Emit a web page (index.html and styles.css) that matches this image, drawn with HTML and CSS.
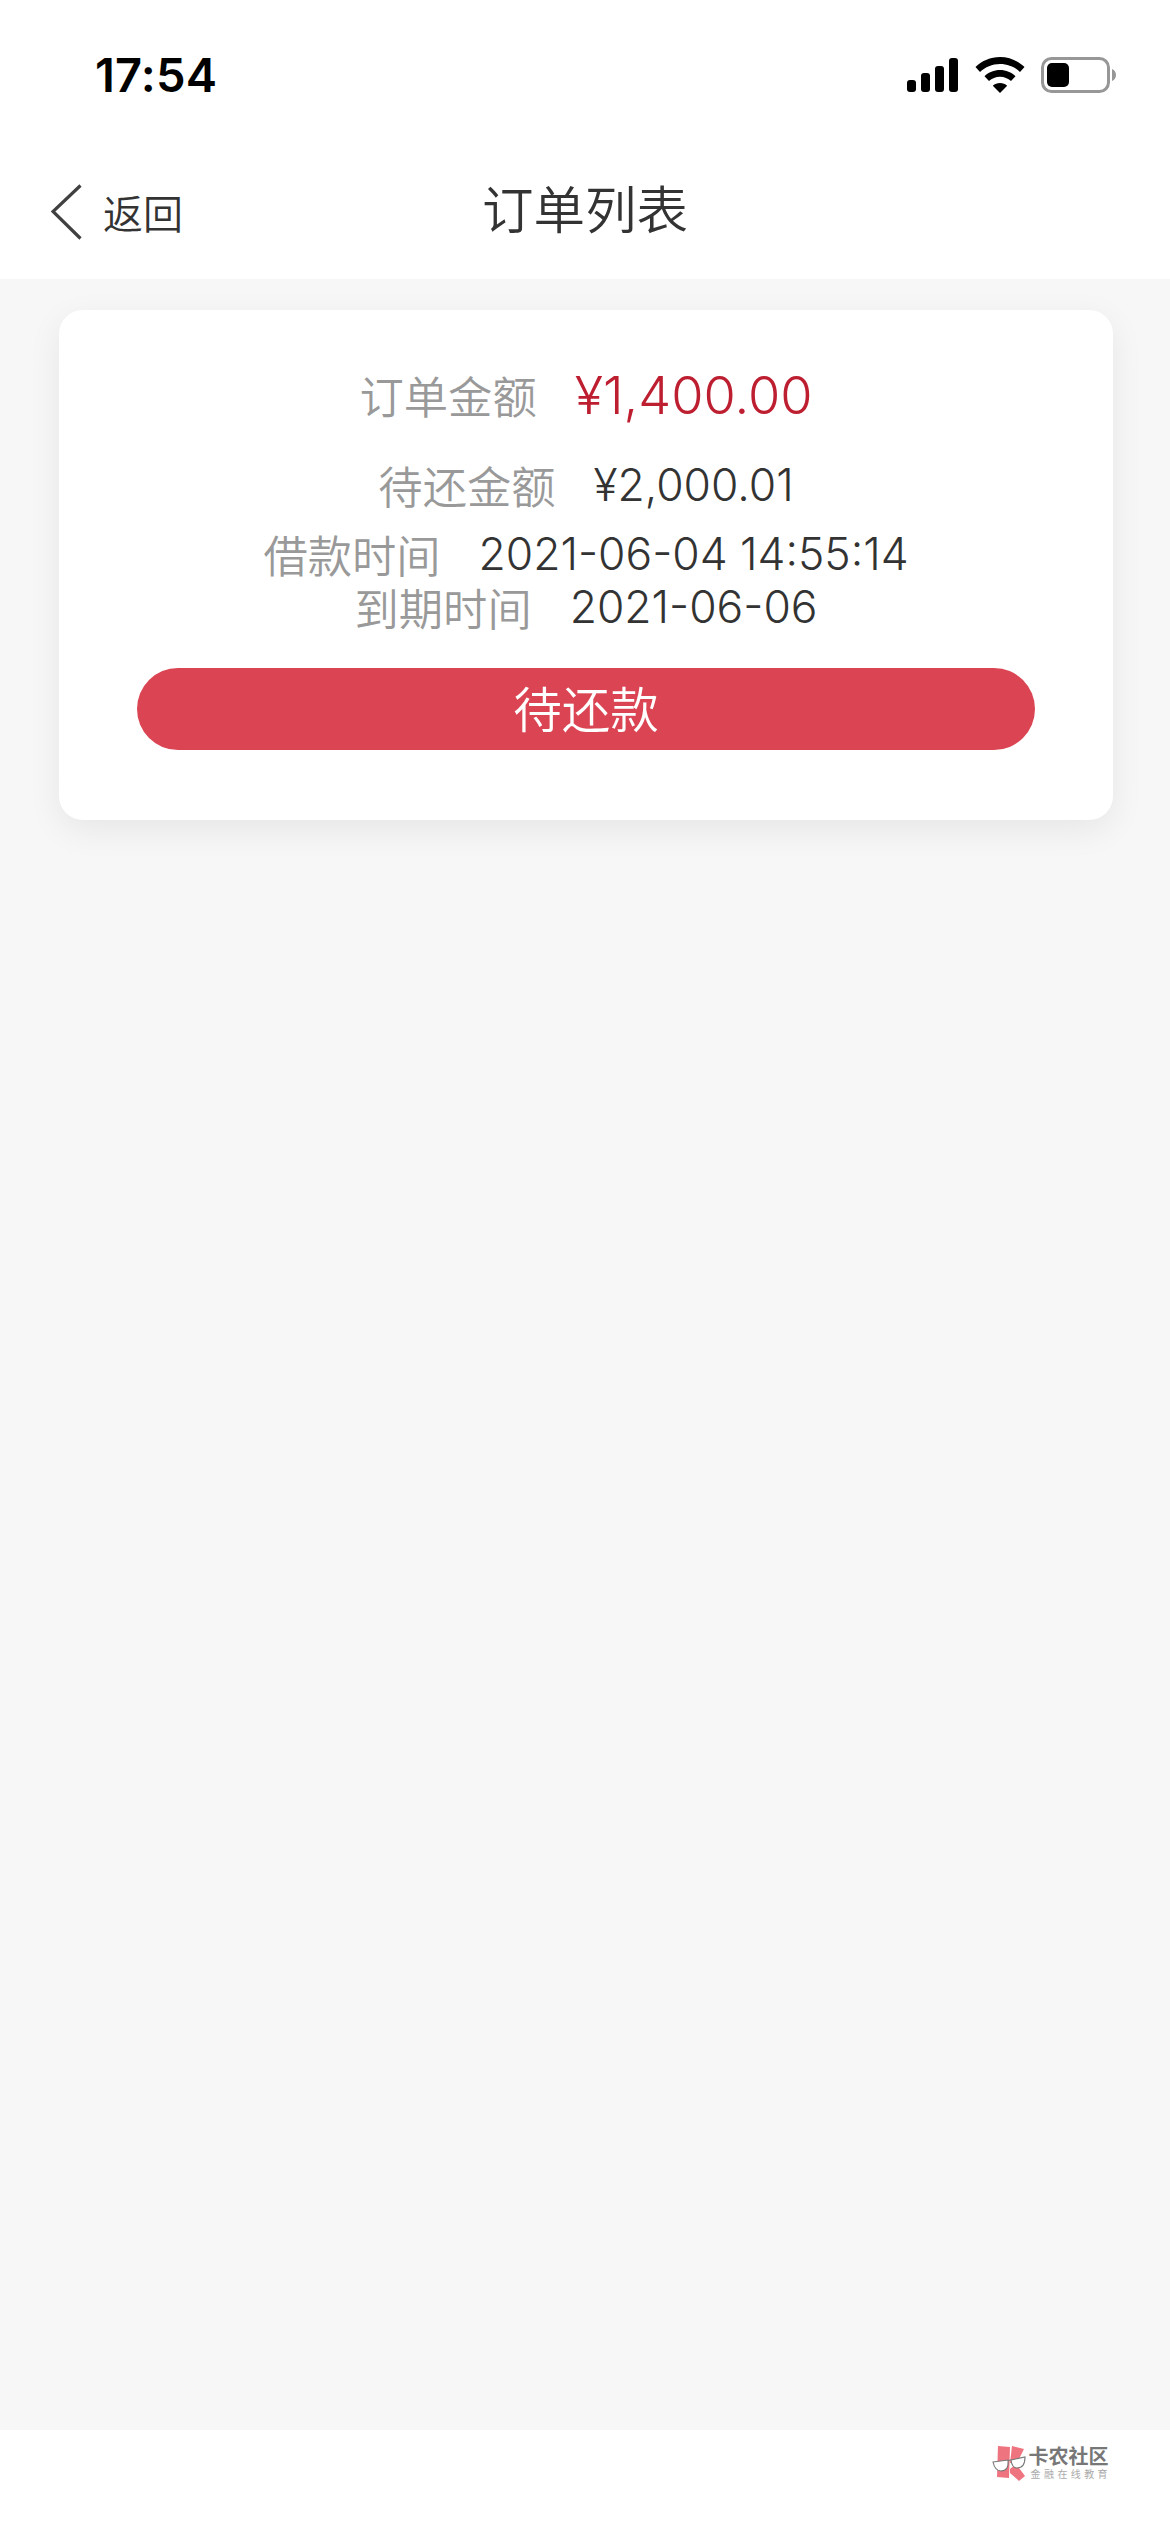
FILE: index.html
```html
<!DOCTYPE html>
<html lang="zh-CN">
<head>
<meta charset="utf-8">
<title>订单列表</title>
<link rel="stylesheet" href="styles.css">
</head>
<body>
<div class="page">
  <header class="top">
    <div class="status">
      <span class="time">17:54</span>
      <div class="status-icons">
        <svg class="signal" width="52" height="34" viewBox="0 0 52 34"><rect x="0" y="22" width="9" height="12" rx="3"/><rect x="14" y="15" width="9" height="19" rx="3"/><rect x="28" y="8" width="9" height="26" rx="3"/><rect x="42" y="0" width="9" height="34" rx="3"/></svg>
        <svg class="wifi" width="50" height="36" viewBox="0 0 50 36"><path d="M25 0C34.500 0 43 3.800 49.500 10L45 15C39.800 10 32.800 7 25 7S10.200 10 5 15L.5 10C7 3.800 15.500 0 25 0Z"/><path d="M25 13C31 13 36.400 15.300 40.500 19.200L36 24C33.100 21.300 29.200 19.700 25 19.700S16.900 21.300 14 24L9.500 19.200C13.600 15.300 19 13 25 13Z"/><path d="M25 26C27.800 26 30.300 27 32.200 28.800L25 36L17.800 28.800C19.700 27 22.200 26 25 26Z"/></svg>
        <svg class="battery" width="76" height="36" viewBox="0 0 76 36"><rect x="1.500" y="1.500" width="66" height="33" rx="9" fill="none" stroke="#979797" stroke-width="3"/><rect x="6" y="6" width="22" height="24" rx="5" fill="#000"/><path d="M71 12C73.500 13 75 15.300 75 18S73.500 23 71 24Z" fill="#979797"/></svg>
      </div>
    </div>
    <nav class="nav">
      <div class="back">
        <svg class="chev" width="32" height="56" viewBox="0 0 32 56"><path d="M29.500 1.500L2 27.500L29.500 54.500" fill="none" stroke="#404040" stroke-width="3.200"/></svg>
        <span class="back-text">返回</span>
      </div>
      <h1 class="title">订单列表</h1>
    </nav>
  </header>
  <main class="content">
    <section class="card">
      <div class="row row-main"><span class="label">订单金额</span><span class="val-red">¥1,400.00</span></div>
      <div class="row row-due"><span class="label">待还金额</span><span class="val">¥2,000.01</span></div>
      <div class="row row-date"><span class="label">借款时间</span><span class="val">2021-06-04 14:55:14</span></div>
      <div class="row"><span class="label">到期时间</span><span class="val">2021-06-06</span></div>
      <div class="btn">待还款</div>
    </section>
  </main>
  <footer class="foot">
    <div class="brand">
      <svg class="brand-mark" width="34" height="36" viewBox="0 0 34 36">
        <path d="M6 1L18 2L17 33L5 32Z" fill="#ee7480"/>
        <path d="M20 1L32 4L25 18H18Z" fill="#ee7480"/>
        <path d="M18 24L24 19L33 31L27 36L18 28Z" fill="#ee7480"/>
        <path d="M1 17L16 15Q17 26 9 26Q3 26 1 17Z" fill="#fff" stroke="#777" stroke-width="1.100"/>
        <path d="M19 15L33 12Q33 23 25 23Q20 23 19 15Z" fill="#fff" stroke="#777" stroke-width="1.100"/>
        <path d="M16 15.500L19 15" fill="none" stroke="#777" stroke-width="1.100"/>
      </svg>
      <div class="brand-text">
        <span class="brand-name">卡农社区</span>
        <span class="brand-sub">金融在线教育</span>
      </div>
    </div>
  </footer>
</div>
</body>
</html>
```
FILE: styles.css
```css
* { box-sizing: border-box; }
html, body { margin: 0; padding: 0; }
body {
  width: 1170px;
  height: 2532px;
  overflow: hidden;
  font-family: "Inter", "Noto Sans CJK SC", sans-serif;
  font-weight: 300;
  background: #f7f7f7;
}
.page { display: flex; flex-direction: column; height: 2532px; }
.top { background: #fff; height: 279px; flex: none; }
.status {
  height: 148px;
  padding: 0 53px 0 95px;
  display: flex;
  align-items: center;
  justify-content: space-between;
}
.time { font-size: 47px; font-weight: 600; color: #000; line-height: 1; letter-spacing: 0.2px; }
.status-icons { display: flex; align-items: center; gap: 16px; margin-top: 1px; }
.signal, .wifi { fill: #000; display: block; }
.battery { display: block; }
.nav {
  height: 131px;
  position: relative;
  display: flex;
  align-items: center;
  justify-content: center;
}
.back {
  position: absolute;
  left: 51px;
  top: 36px;
  display: flex;
  align-items: center;
  gap: 20px;
}
.chev { display: block; }
.back-text { font-family: "Noto Sans CJK SC", sans-serif; font-size: 40px; font-weight: 350; color: #333; line-height: 56px; }
.title { margin: 0 0 14px; font-family: "Noto Sans CJK SC", sans-serif; font-size: 51.500px; font-weight: 350; color: #333; line-height: 60px; }
.content { flex: 1; padding: 31px 57px 0 59px; }
.card {
  background: #fff;
  border-radius: 24px;
  height: 510px;
  padding: 53px 78px 0;
  box-shadow: 0 10px 34px rgba(0, 0, 0, .07);
}
.row { display: flex; justify-content: center; align-items: center; gap: 38px; line-height: 53px; height: 53px; font-size: 44px; }
.row-main { height: 64px; line-height: 64px; }
.row-due { margin-top: 32px; }
.row-date { margin-top: 16px; }
.label { font-family: "Noto Sans CJK SC", sans-serif; color: #999; font-size: 44.300px; font-weight: 350; }
.val { color: #333; font-size: 44.400px; font-weight: 350; }
.val-red { color: #bd1e30; font-size: 52.300px; font-weight: 350; }
.btn {
  margin-top: 34px;
  height: 82px;
  border-radius: 41px;
  background: #db4553;
  color: #fff;
  font-family: "Noto Sans CJK SC", sans-serif;
  font-size: 48.500px;
  font-weight: 350;
  line-height: 78px;
  text-align: center;
}
.foot { flex: none; height: 102px; background: #fff; padding: 15px 59px 0 0; display: flex; justify-content: flex-end; align-items: flex-start; }
.brand { display: flex; gap: 3px; }
.brand-mark { display: block; }
.brand-text { display: flex; flex-direction: column; font-family: "Noto Sans CJK SC", sans-serif; }
.brand-name { font-size: 20px; font-weight: 700; color: #777; line-height: 22px; white-space: nowrap; }
.brand-sub { font-size: 10px; font-weight: 400; color: #aaa; line-height: 13px; letter-spacing: 3.400px; white-space: nowrap; margin-left: 2px; }
```
